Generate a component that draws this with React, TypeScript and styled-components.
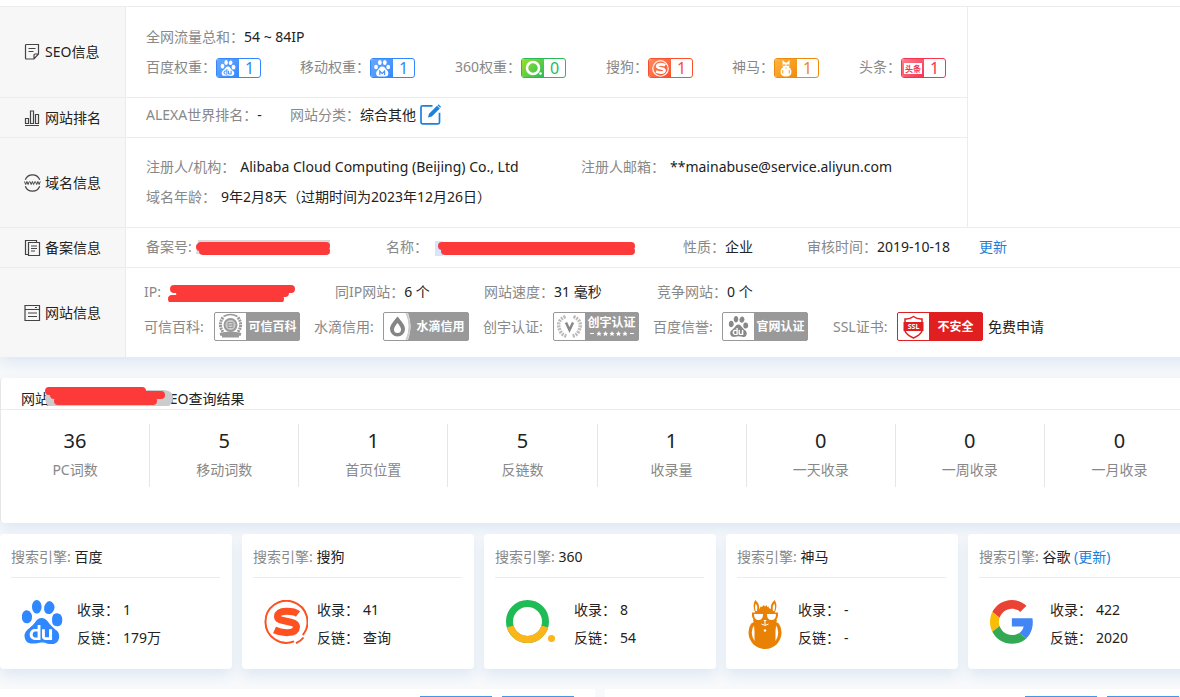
import React from 'react';
import styled, { createGlobalStyle } from 'styled-components';
import { SiBaidu } from 'react-icons/si';

const Global = createGlobalStyle`
  * { box-sizing: border-box; }
  body {
    margin: 0;
    overflow-x: hidden;
    background: #f8f9fb;
    color: #222;
    font-family: "Noto Sans", "Noto Sans CJK SC", sans-serif;
    font-size: 14px;
    line-height: 30px;
  }
`;

const shadow = '0 6px 14px 0 #dce7f3';

const Page = styled.main`
  width: 100%;
  min-width: 1200px;
`;

const InfoPanel = styled.section`
  padding-top: 6px;
  margin-bottom: 21px;
  background: #fff;
  box-shadow: ${shadow};
`;

const InfoRows = styled.div`
  border-top: 1px solid #ececec;
`;

const InfoRow = styled.div<{ $height: number; $narrow?: boolean }>`
  display: flex;
  min-height: ${(p) => p.$height}px;
  ${(p) => p.$narrow && 'width: 968px; border-right: 1px solid #ececec;'}

  & + & { border-top: 1px solid #ececec; }
`;

const RowHead = styled.h2`
  display: flex;
  align-items: center;
  gap: 4px;
  flex: none;
  width: 126px;
  margin: 0;
  padding-left: 24px;
  background: #f7f7f7;
  border-right: 1px solid #ececec;
  font-size: 14px;
  font-weight: 400;

  svg { flex: none; }
`;

const RowBody = styled.div<{ $lift?: number; $indent?: number }>`
  display: flex;
  flex-direction: column;
  justify-content: center;
  flex: 1;
  padding: 0 0 ${(p) => p.$lift ?? 0}px ${(p) => p.$indent ?? 20}px;
`;

const Line = styled.div<{ $height?: number }>`
  display: flex;
  align-items: center;
  height: ${(p) => p.$height ?? 30}px;
  white-space: nowrap;
`;

const Item = styled.div<{ $width?: number; $gap?: number }>`
  display: flex;
  align-items: center;
  flex: none;
  gap: ${(p) => p.$gap ?? 0}px;
  width: ${(p) => (p.$width ? `${p.$width}px` : 'auto')};
`;

const Label = styled.span<{ $width?: number }>`
  flex: none;
  color: #888;
  width: ${(p) => (p.$width ? `${p.$width}px` : 'auto')};
`;

const Link = styled.a<{ $dark?: boolean }>`
  color: ${(p) => (p.$dark ? '#222' : '#1a7fd8')};
  text-decoration: none;
`;

const IconButton = styled.button`
  display: flex;
  margin-left: 4px;
  padding: 0;
  border: 0;
  background: none;
`;

const Weight = styled.span<{ $color: string; $from: string }>`
  display: flex;
  align-items: stretch;
  width: 45px;
  height: 20px;
  margin-top: 2px;
  overflow: hidden;
  border: 1px solid ${(p) => p.$color};
  border-radius: 3px;
  background: #fff;
  color: ${(p) => p.$color};
  font-size: 16px;
  line-height: 19px;

  i {
    display: flex;
    align-items: center;
    justify-content: center;
    width: 22px;
    background: linear-gradient(135deg, ${(p) => p.$from}, ${(p) => p.$color});
    color: #fff;
    font-style: normal;
  }

  b {
    flex: 1;
    font-weight: 400;
    text-align: center;
  }
`;

const Trust = styled.span<{ $color: string }>`
  display: flex;
  width: 86px;
  height: 29px;
  overflow: hidden;
  border: 1px solid ${(p) => p.$color};
  border-radius: 2px;
  background: ${(p) => p.$color};
  color: #fff;
  font-size: 12px;
  font-weight: 700;
  line-height: 27px;

  > svg { flex: none; background: #fff; }
`;

const TrustText = styled.span`
  display: flex;
  flex: 1;
  flex-direction: column;
  align-items: center;
  justify-content: center;
`;

const TrustStacked = styled(TrustText)`
  line-height: 14px;
`;

const ResultPanel = styled.section`
  min-height: 145px;
  margin-bottom: 11px;
  background: #fff;
  border-left: 1px solid #e6e6e6;
  border-radius: 4px;
  box-shadow: ${shadow};
`;

const ResultTitle = styled.h2`
  display: flex;
  height: 32px;
  margin: 0;
  padding: 6px 0 0 20px;
  border-bottom: 1px solid #ececec;
  font-size: 14px;
  font-weight: 400;

  svg { position: relative; flex: none; margin: 1px -11px 0 -5px; }
`;

const Metrics = styled.div`
  display: grid;
  grid-template-columns: repeat(8, 1fr);
  margin: 14px 6px 0 0;
`;

const Metric = styled.div`
  height: 63px;
  border-right: 1px solid #e6e6e6;
  color: #888;
  text-align: center;

  strong {
    display: block;
    color: #222;
    font-size: 20px;
    font-weight: 400;
    line-height: 34px;
  }

  span { display: block; line-height: 24px; }
  &:last-child { border-right: 0; }
`;

const Engines = styled.section`
  display: grid;
  grid-template-columns: repeat(5, 1fr);
  gap: 10px;
  margin-bottom: 20px;
`;

const Card = styled.article`
  height: 135px;
  padding: 8px 12px 0 11px;
  background: #fff;
  border-radius: 4px;
  box-shadow: ${shadow};
`;

const CardTitle = styled.h3`
  height: 36px;
  margin: 0;
  border-bottom: 1px solid #ececec;
  font-size: 14px;
  font-weight: 400;
`;

const CardBody = styled.div`
  display: flex;
  gap: 9px;
  padding: 18px 0 0 11px;

  > svg { flex: none; margin-top: 4px; }
`;

const Stats = styled.dl`
  margin: 0;
  line-height: 28px;

  div { display: flex; gap: 4px; }
  dd { margin: 0; }
`;

const Panels = styled.section`
  display: grid;
  grid-template-columns: 1fr 1fr;
  gap: 10px;
`;

const Panel = styled.div`
  display: flex;
  justify-content: flex-end;
  gap: 10px;
  height: 8px;
  padding: 7px 21px 0 0;
  background: #fff;
`;

const TabEdge = styled.div`
  width: 72px;
  height: 1px;
  background: #4496ec;
`;

const RED = '#fc3a3a';

function Scribble({ width, height = 20, d, back }: { width: number; height?: number; d: string; back?: React.ReactNode }) {
  return (
    <svg width={width} height={height} viewBox={`0 0 ${width} ${height}`} aria-hidden="true">
      {back}
      <path d={d} fill="none" stroke={RED} strokeWidth="8" strokeLinecap="round" strokeLinejoin="round" />
    </svg>
  );
}

const line = { fill: 'none', stroke: '#444', strokeWidth: 1.2 } as const;

const NoteIcon = () => (
  <svg width="17" height="18" viewBox="0 0 17 18" {...line}>
    <path d="M2.500 1.500h12v9.500l-4.500 5h-7.500q-1 0-1-1v-12.500q0-1 1-1zM14.500 11h-3.500q-1 0-1 1v4M4.500 5.500h7M4.500 8.500h5" />
  </svg>
);
const ChartIcon = () => (
  <svg width="17" height="18" viewBox="0 0 17 18" {...line}>
    <path d="M1 16.500h14M1.500 14.500v-5h3v5zM6.500 14.500v-12.500h3v12.500zM11.500 14.500v-9h3v9z" />
  </svg>
);
const WwwIcon = () => (
  <svg width="17" height="18" viewBox="0 0 17 18" {...line}>
    <path d="M1 5.500a7.500 7.500 0 0 1 15 0M1 12.500a7.500 7.500 0 0 0 15 0" transform="translate(0 0)" stroke="none" />
    <path d="M1.300 5.800a7.700 7.700 0 0 1 14.400 0M1.300 12.200a7.700 7.700 0 0 0 14.400 0" />
    <path strokeWidth="1" d="M.5 7.500l1.200 3 1.200-3 1.200 3 1.200-3M6 7.500l1.200 3 1.200-3 1.200 3 1.200-3M11.500 7.500l1.200 3 1.200-3 1.200 3 1.200-3" />
  </svg>
);
const DocsIcon = () => (
  <svg width="17" height="18" viewBox="0 0 17 18" {...line}>
    <path d="M4.500 3.500h11v13h-11zM4.500 15.500h-3v-14h11v2M7 7h6M7 9.500h6M7 12h4" />
  </svg>
);
const ListIcon = () => (
  <svg width="17" height="18" viewBox="0 0 17 18" {...line}>
    <path d="M1 1.500h14.500v15h-14.500zM1 5.500h14.500M4 9h9M4 12.500h9M11 3.500h2" />
  </svg>
);
const EditIcon = () => (
  <svg width="21" height="21" viewBox="0 0 21 21" fill="none" stroke="#1a82dc" strokeWidth="1.700">
    <path d="M12.500 1.800h-10q-1.500 0-1.500 1.500v15q0 1.500 1.500 1.500h15.500q1.500 0 1.500-1.500v-9.500" />
    <path d="M8 13.500l1-3.800 8-8 2.800 2.800-8 8z" fill="#1a82dc" stroke="none" />
    <path d="M17.500 1.200l1-1 2.600 2.600-1 1z" fill="#1a82dc" stroke="none" />
  </svg>
);

const PawMobile = () => (
  <svg width="17" height="17" viewBox="0 0 17 17">
    <g fill="currentColor">
      <ellipse cx="2" cy="7" rx="1.900" ry="2.300" />
      <ellipse cx="5.800" cy="2.600" rx="1.900" ry="2.500" />
      <ellipse cx="10.800" cy="2.600" rx="1.900" ry="2.500" />
      <ellipse cx="14.200" cy="7" rx="1.900" ry="2.300" />
      <path d="M8.200 6.500c2.500 0 3 2.200 4.800 3.700 2.500 2.300 1.300 6.300-1.500 6.300H5c-2.800 0-4-4-1.500-6.300 1.800-1.500 2.300-3.700 4.700-3.700z" />
    </g>
    <path d="M5.800 15v-4l2.400 2.700 2.400-2.700v4" fill="none" stroke="#4b93fd" strokeWidth="1.200" />
  </svg>
);
const Ring360Small = () => (
  <svg width="20" height="18" viewBox="0 0 20 18">
    <circle cx="10" cy="9" r="6" fill="none" stroke="#fff" strokeWidth="2.500" />
    <circle cx="17.500" cy="14.500" r="1.300" fill="#fff" />
  </svg>
);
const S_PATH = 'M34 14C30 11 14 9 13.500 16.500C13 23 32.500 19.500 32.500 27C32 35 17 33 10.500 30';
const SogouSmall = () => (
  <svg width="17" height="17" viewBox="0 0 44 44" fill="none" stroke="#fff">
    <circle cx="22" cy="22" r="20" strokeWidth="3" />
    <path d={S_PATH} strokeWidth="7" />
  </svg>
);

function Llama({ width, height, color, hole }: { width: number; height: number; color: string; hole: string }) {
  return (
    <svg width={width} height={height} viewBox="0 0 34 49" preserveAspectRatio="xMinYMin meet">
      <circle cx="17" cy="32.500" r="16.500" fill={color} />
      <path d="M6.500 24.500Q1 32 6.500 41zM27.500 24.500Q33 32 27.500 41z" fill={hole} />
      <path
        fill={color}
        d="M8 14Q3.500 6 7.300 0 12 4 11 9.500L12 8l.5-1.500L14 7l1.500-2L17 6.500 19 5v2l2-.5-.3 1.500 2.300 1Q22 4 26.700 0 30.500 6 26 14l3 7-2 10H7L5 21z"
      />
      <path d="M7.700 3.500Q10 6 9 11L7.700 11Q6.300 7 7.700 3.500zM26.300 3.500Q24 6 25 11L26.300 11Q27.700 7 26.300 3.500z" fill={hole} />
      <path d="M4 12.500h26v3.500q-1 5.500-6.500 5.500T17.500 16h-1q-.5 5.500-6 5.500T4 16z" fill={color} />
      <path d="M6 14h9q0 6-4.500 6T6 14zM19 14h9q0 6-4.500 6T19 14zM15.300 20h3.400L17 22.300z" fill={hole} />
      <path d="M0 12h4v8l2 2q-3 1-6 4zM34 12h-4v8l-2 2q3 1 6 4z" fill={hole} />
      <circle cx="17" cy="30.500" r="1.200" fill={hole} />
      <path d="M17 22v3M13.500 24q3.500 3 7 0" fill="none" stroke={hole} />
    </svg>
  );
}

const LlamaSmall = () => (
  <svg width="12" height="17" viewBox="0 0 12 17">
    <path d="M2.500 0L5 2.500h2L9.500 0v6L8.800 7Q11.500 8.500 11.500 11.500 11.500 16.500 6 16.500T.5 11.500Q.5 8.500 3.200 7L2.500 6z" fill="#fff" />
    <path d="M2.500 4.500h3v1.300h-3zM6.500 4.500h3v1.300h-3zM2.300 10h1v3.500h-1zM8.700 10h1v3.500h-1zM5.500 7.500h1v1h-1z" fill="#f99f1f" />
  </svg>
);

const SogouLogo = () => (
  <svg width="44" height="44" viewBox="0 0 44 44" fill="none" stroke="#fd5122">
    <path d="M38.800 35A21 21 0 1 0 30 41.400M39.500 37.500Q37 41 32 43.200" strokeWidth="2" />
    <path d={S_PATH} strokeWidth="7" />
  </svg>
);
const Logo360 = () => (
  <svg width="59" height="44" viewBox="0 0 59 44" fill="none" strokeWidth="7">
    <circle cx="21.500" cy="21.500" r="18" stroke="#1fbb55" />
    <path d="M4.200 26.500A18 18 0 0 0 38.800 26.500" stroke="#fcb61a" />
    <circle cx="45.500" cy="38.500" r="3.500" fill="#fcb61a" />
  </svg>
);
const GoogleLogo = () => (
  <svg width="51" height="44" viewBox="0 0 56 48" preserveAspectRatio="xMinYMin meet">
    <path fill="#ea4335" d="M24 9.500c3.540 0 6.710 1.220 9.210 3.600l6.850-6.850C35.900 2.380 30.470 0 24 0 14.620 0 6.510 5.380 2.560 13.220l7.980 6.190C12.430 13.720 17.740 9.500 24 9.500z" />
    <path fill="#4285f4" d="M46.980 24.550c0-1.570-.15-3.090-.38-4.550H24v9.020h12.940c-.58 2.960-2.260 5.480-4.780 7.180l7.730 6c4.510-4.180 7.090-10.360 7.090-17.650z" />
    <path fill="#fbbc05" d="M10.530 28.590c-.48-1.450-.76-2.990-.76-4.590s.27-3.140.76-4.590l-7.980-6.190C.92 16.460 0 20.120 0 24c0 3.880.92 7.540 2.560 10.780l7.970-6.190z" />
    <path fill="#34a853" d="M24 48c6.480 0 11.930-2.130 15.890-5.810l-7.730-6c-2.150 1.450-4.920 2.300-8.160 2.300-6.260 0-11.570-4.220-13.470-9.910l-7.980 6.190C6.510 42.620 14.620 48 24 48z" />
  </svg>
);
const BaiduLogo = () => (
  <svg width="46" height="44" viewBox="0 0 46 44">
    <SiBaidu x={-2} y={0} size={44} color="#2f88ff" />
  </svg>
);

const GREY = '#999';
const SealIcon = () => (
  <svg width="31" height="27" viewBox="0 0 31 27" fill="none" stroke={GREY}>
    <circle cx="15.500" cy="12" r="6" strokeWidth="2" fill="#ccc" />
    <path d="M8 4.500Q2.500 12 8.500 19.500M23 4.500Q28.500 12 22.500 19.500" strokeWidth="3" strokeDasharray="2 .7" />
    <path d="M8.500 3.500Q15.500-.5 22.500 3.500" strokeWidth="1.500" />
    <path d="M13 9.500h5v5h-5zM13 12h5" />
    <path d="M5 21.500q10.500-3 21 0M7 23h17" strokeWidth="3" />
  </svg>
);
const DropIcon = () => (
  <svg width="29" height="27" viewBox="0 0 29 27">
    <path d="M24 0h5v27h-5q5-13.500 0-27z" fill={GREY} />
    <path d="M21.500 0h2q6 13.500 0 27h-2q6-13.500 0-27z" fill="#ccc" />
    <path d="M13.500 3.500c4 5 7.500 8.500 7.500 12.500a7.500 7.500 0 0 1-15 0c0-4 3.500-7.500 7.500-12.500z" fill="#858585" />
    <path d="M13.500 10c2 2.500 3.500 4.500 3.500 6.500a3.500 3.500 0 0 1-7 0c0-2 1.500-4 3.500-6.500z" fill="#fff" />
  </svg>
);
const LaurelIcon = () => (
  <svg width="31" height="27" viewBox="0 0 31 27" fill="none">
    <path d="M11.500 3.500Q1 8 6.500 18.500 8 22 12.500 23M19.500 3.500Q30 8 24.500 18.500 23 22 18.500 23" stroke="#bbb" strokeWidth="3.500" strokeDasharray="2 1" />
    <path d="M12 9.500l3.500 7.500 3.500-7.500" stroke="#888" strokeWidth="2.500" />
  </svg>
);
const GreyPaw = () => (
  <svg width="31" height="27" viewBox="0 0 31 27">
    <SiBaidu x={5} y={3} size={21} color="#888" />
  </svg>
);
const ShieldIcon = () => (
  <svg width="31" height="27" viewBox="0 0 31 27">
    <path d="M15.500 3.500q4 3 8.500 2.500v12q-1.500 4-8.500 7-7-3-8.500-7V6q4.500.5 8.500-2.500z" fill="none" stroke="#e01f21" strokeWidth="1.500" />
    <path d="M5.500 9h20v9h-20z" fill="#e01f21" />
    <text x="15.500" y="16" textAnchor="middle" fontSize="7" fontWeight="700" fill="#fff">SSL</text>
  </svg>
);
const Stars = () => (
  <svg width="46" height="7" viewBox="0 0 46 7">
    <path d="M1 3.500h4M41 3.500h4" stroke="#fff" />
    {[10, 16.5, 23, 29.5, 36].map((x) => (
      <path key={x} transform={`translate(${x} 3.500)`} fill="#fff" d="M0-2.500l.8 1.700 1.800.2-1.300 1.200.4 1.900L0 1.600l-1.700.9.4-1.900-1.300-1.200 1.800-.2z" />
    ))}
  </svg>
);

const ToutiaoMark = styled.span`
  padding: 0 1px;
  background: #fff;
  color: #f8334f;
  font-size: 8px;
  font-weight: 700;
  line-height: 11px;
`;

const weights = [
  { label: '百度权重：', value: 1, width: 154, color: '#3388ff', from: '#6ba8ff', icon: <SiBaidu size={16} /> },
  { label: '移动权重：', value: 1, width: 155, color: '#3388ff', from: '#6ba8ff', icon: <PawMobile /> },
  { label: '360权重：', value: 0, width: 151, color: '#2abb58', from: '#9be02a', icon: <Ring360Small /> },
  { label: '搜狗：', value: 1, width: 126, color: '#f9512a', from: '#ff8a62', icon: <SogouSmall /> },
  { label: '神马：', value: 1, width: 127, color: '#f08a0c', from: '#ffb540', icon: <LlamaSmall /> },
  { label: '头条：', value: 1, width: 88, color: '#f8334f', from: '#ff8090', icon: <ToutiaoMark>头条</ToutiaoMark> },
];

const metrics = [
  ['36', 'PC词数'], ['5', '移动词数'], ['1', '首页位置'], ['5', '反链数'],
  ['1', '收录量'], ['0', '一天收录'], ['0', '一周收录'], ['0', '一月收录'],
];

const engines = [
  { name: '百度', indexed: '1', links: '179万', logo: <BaiduLogo /> },
  { name: '搜狗', indexed: '41', links: '查询', logo: <SogouLogo /> },
  { name: '360', indexed: '8', links: '54', logo: <Logo360 /> },
  { name: '神马', indexed: '-', links: '-', logo: <Llama width={41} height={49} color="#e88104" hole="#fff" /> },
  { name: '谷歌', indexed: '422', links: '2020', logo: <GoogleLogo />, refresh: true },
];

export default function App() {
  return (
    <>
      <Global />
      <Page>
        <InfoPanel>
          <InfoRows>
            <InfoRow $height={90} $narrow>
              <RowHead><NoteIcon />SEO信息</RowHead>
              <RowBody>
                <Line><Label>全网流量总和：</Label>54 ~ 84IP</Line>
                <Line>
                  {weights.map((w) => (
                    <Item key={w.label} $width={w.width}>
                      <Label>{w.label}</Label>
                      <Weight $color={w.color} $from={w.from}><i>{w.icon}</i><b>{w.value}</b></Weight>
                    </Item>
                  ))}
                </Line>
              </RowBody>
            </InfoRow>
            <InfoRow $height={40} $narrow>
              <RowHead><ChartIcon />网站排名</RowHead>
              <RowBody $lift={6}>
                <Line>
                  <Item $width={144}><Label>ALEXA世界排名：</Label>-</Item>
                  <Item>
                    <Label>网站分类：</Label>综合其他
                    <IconButton type="button" aria-label="编辑"><EditIcon /></IconButton>
                  </Item>
                </Line>
              </RowBody>
            </InfoRow>
            <InfoRow $height={90} $narrow>
              <RowHead><WwwIcon />域名信息</RowHead>
              <RowBody $lift={2}>
                <Line>
                  <Item $width={435} $gap={5}><Label>注册人/机构：</Label>Alibaba Cloud Computing (Beijing) Co., Ltd</Item>
                  <Item $gap={5}><Label>注册人邮箱：</Label>**mainabuse@service.aliyun.com</Item>
                </Line>
                <Line>
                  <Item $gap={5}><Label>域名年龄：</Label>9年2月8天（过期时间为2023年12月26日）</Item>
                </Line>
              </RowBody>
            </InfoRow>
            <InfoRow $height={40}>
              <RowHead><DocsIcon />备案信息</RowHead>
              <RowBody $lift={2}>
                <Line>
                  <Item $width={240}>
                    <Label $width={49}>备案号:</Label>
                    <Scribble width={138} d="M5 10H130M8 14H131M6 9H131" back={<path d="M3 3h132v14H1z" fill="#d9d9dc" />} />
                  </Item>
                  <Item $width={297}>
                    <Label $width={49}>名称：</Label>
                    <Scribble width={202} d="M7 9H196M10 14H196" back={<path d="M0 4h8v15H0z" fill="#d8e4fa" />} />
                  </Item>
                  <Item $width={124}><Label>性质：</Label>企业</Item>
                  <Item $width={172}><Label>审核时间：</Label>2019-10-18</Item>
                  <Link href="#refresh">更新</Link>
                </Line>
              </RowBody>
            </InfoRow>
            <InfoRow $height={90}>
              <RowHead><ListIcon />网站信息</RowHead>
              <RowBody $indent={18} $lift={2}>
                <Line>
                  <Item $width={191}>
                    <Label $width={22}>IP:</Label>
                    <Scribble width={130} d="M8 7H125M14 11H119M6 17H114" />
                  </Item>
                  <Item $width={149}><Label>同IP网站：</Label>6 个</Item>
                  <Item $width={173}><Label>网站速度：</Label>31 毫秒</Item>
                  <Item><Label>竞争网站：</Label>0 个</Item>
                </Line>
                <Line $height={40}>
                  <Item $width={170}>
                    <Label $width={70}>可信百科:</Label>
                    <Trust $color={GREY}><SealIcon /><TrustText>可信百科</TrustText></Trust>
                  </Item>
                  <Item $width={169}>
                    <Label $width={69}>水滴信用:</Label>
                    <Trust $color={GREY}><DropIcon /><TrustText>水滴信用</TrustText></Trust>
                  </Item>
                  <Item $width={170}>
                    <Label $width={70}>创宇认证:</Label>
                    <Trust $color={GREY}><LaurelIcon /><TrustStacked>创宇认证<Stars /></TrustStacked></Trust>
                  </Item>
                  <Item $width={180}>
                    <Label $width={69}>百度信誉:</Label>
                    <Trust $color={GREY}><GreyPaw /><TrustText>官网认证</TrustText></Trust>
                  </Item>
                  <Item $width={155}>
                    <Label $width={64}>SSL证书:</Label>
                    <Trust $color="#e01f21"><ShieldIcon /><TrustText>不安全</TrustText></Trust>
                  </Item>
                  <Link $dark href="#apply">免费申请</Link>
                </Line>
              </RowBody>
            </InfoRow>
          </InfoRows>
        </InfoPanel>

        <ResultPanel>
          <ResultTitle>
            网站
            <Scribble
              width={129}
              height={22}
              d="M5 6H98M10 10H117M14 16H109"
              back={<path d="M4 5h116q9 1 9 7t-4 9H4q-6-8 0-16z" fill="#ccc" />}
            />
            SEO查询结果
          </ResultTitle>
          <Metrics>
            {metrics.map(([value, label]) => (
              <Metric key={label}><strong>{value}</strong><span>{label}</span></Metric>
            ))}
          </Metrics>
        </ResultPanel>

        <Engines>
          {engines.map((e) => (
            <Card key={e.name}>
              <CardTitle>
                <Label>搜索引擎: </Label>{e.name}
                {e.refresh && <> <Link href="#google">(更新)</Link></>}
              </CardTitle>
              <CardBody>
                {e.logo}
                <Stats>
                  <div><dt>收录：</dt><dd>{e.indexed}</dd></div>
                  <div><dt>反链：</dt><dd>{e.links}</dd></div>
                </Stats>
              </CardBody>
            </Card>
          ))}
        </Engines>

        <Panels>
          <Panel><TabEdge /><TabEdge /></Panel>
          <Panel><TabEdge /><TabEdge /></Panel>
        </Panels>
      </Page>
    </>
  );
}
